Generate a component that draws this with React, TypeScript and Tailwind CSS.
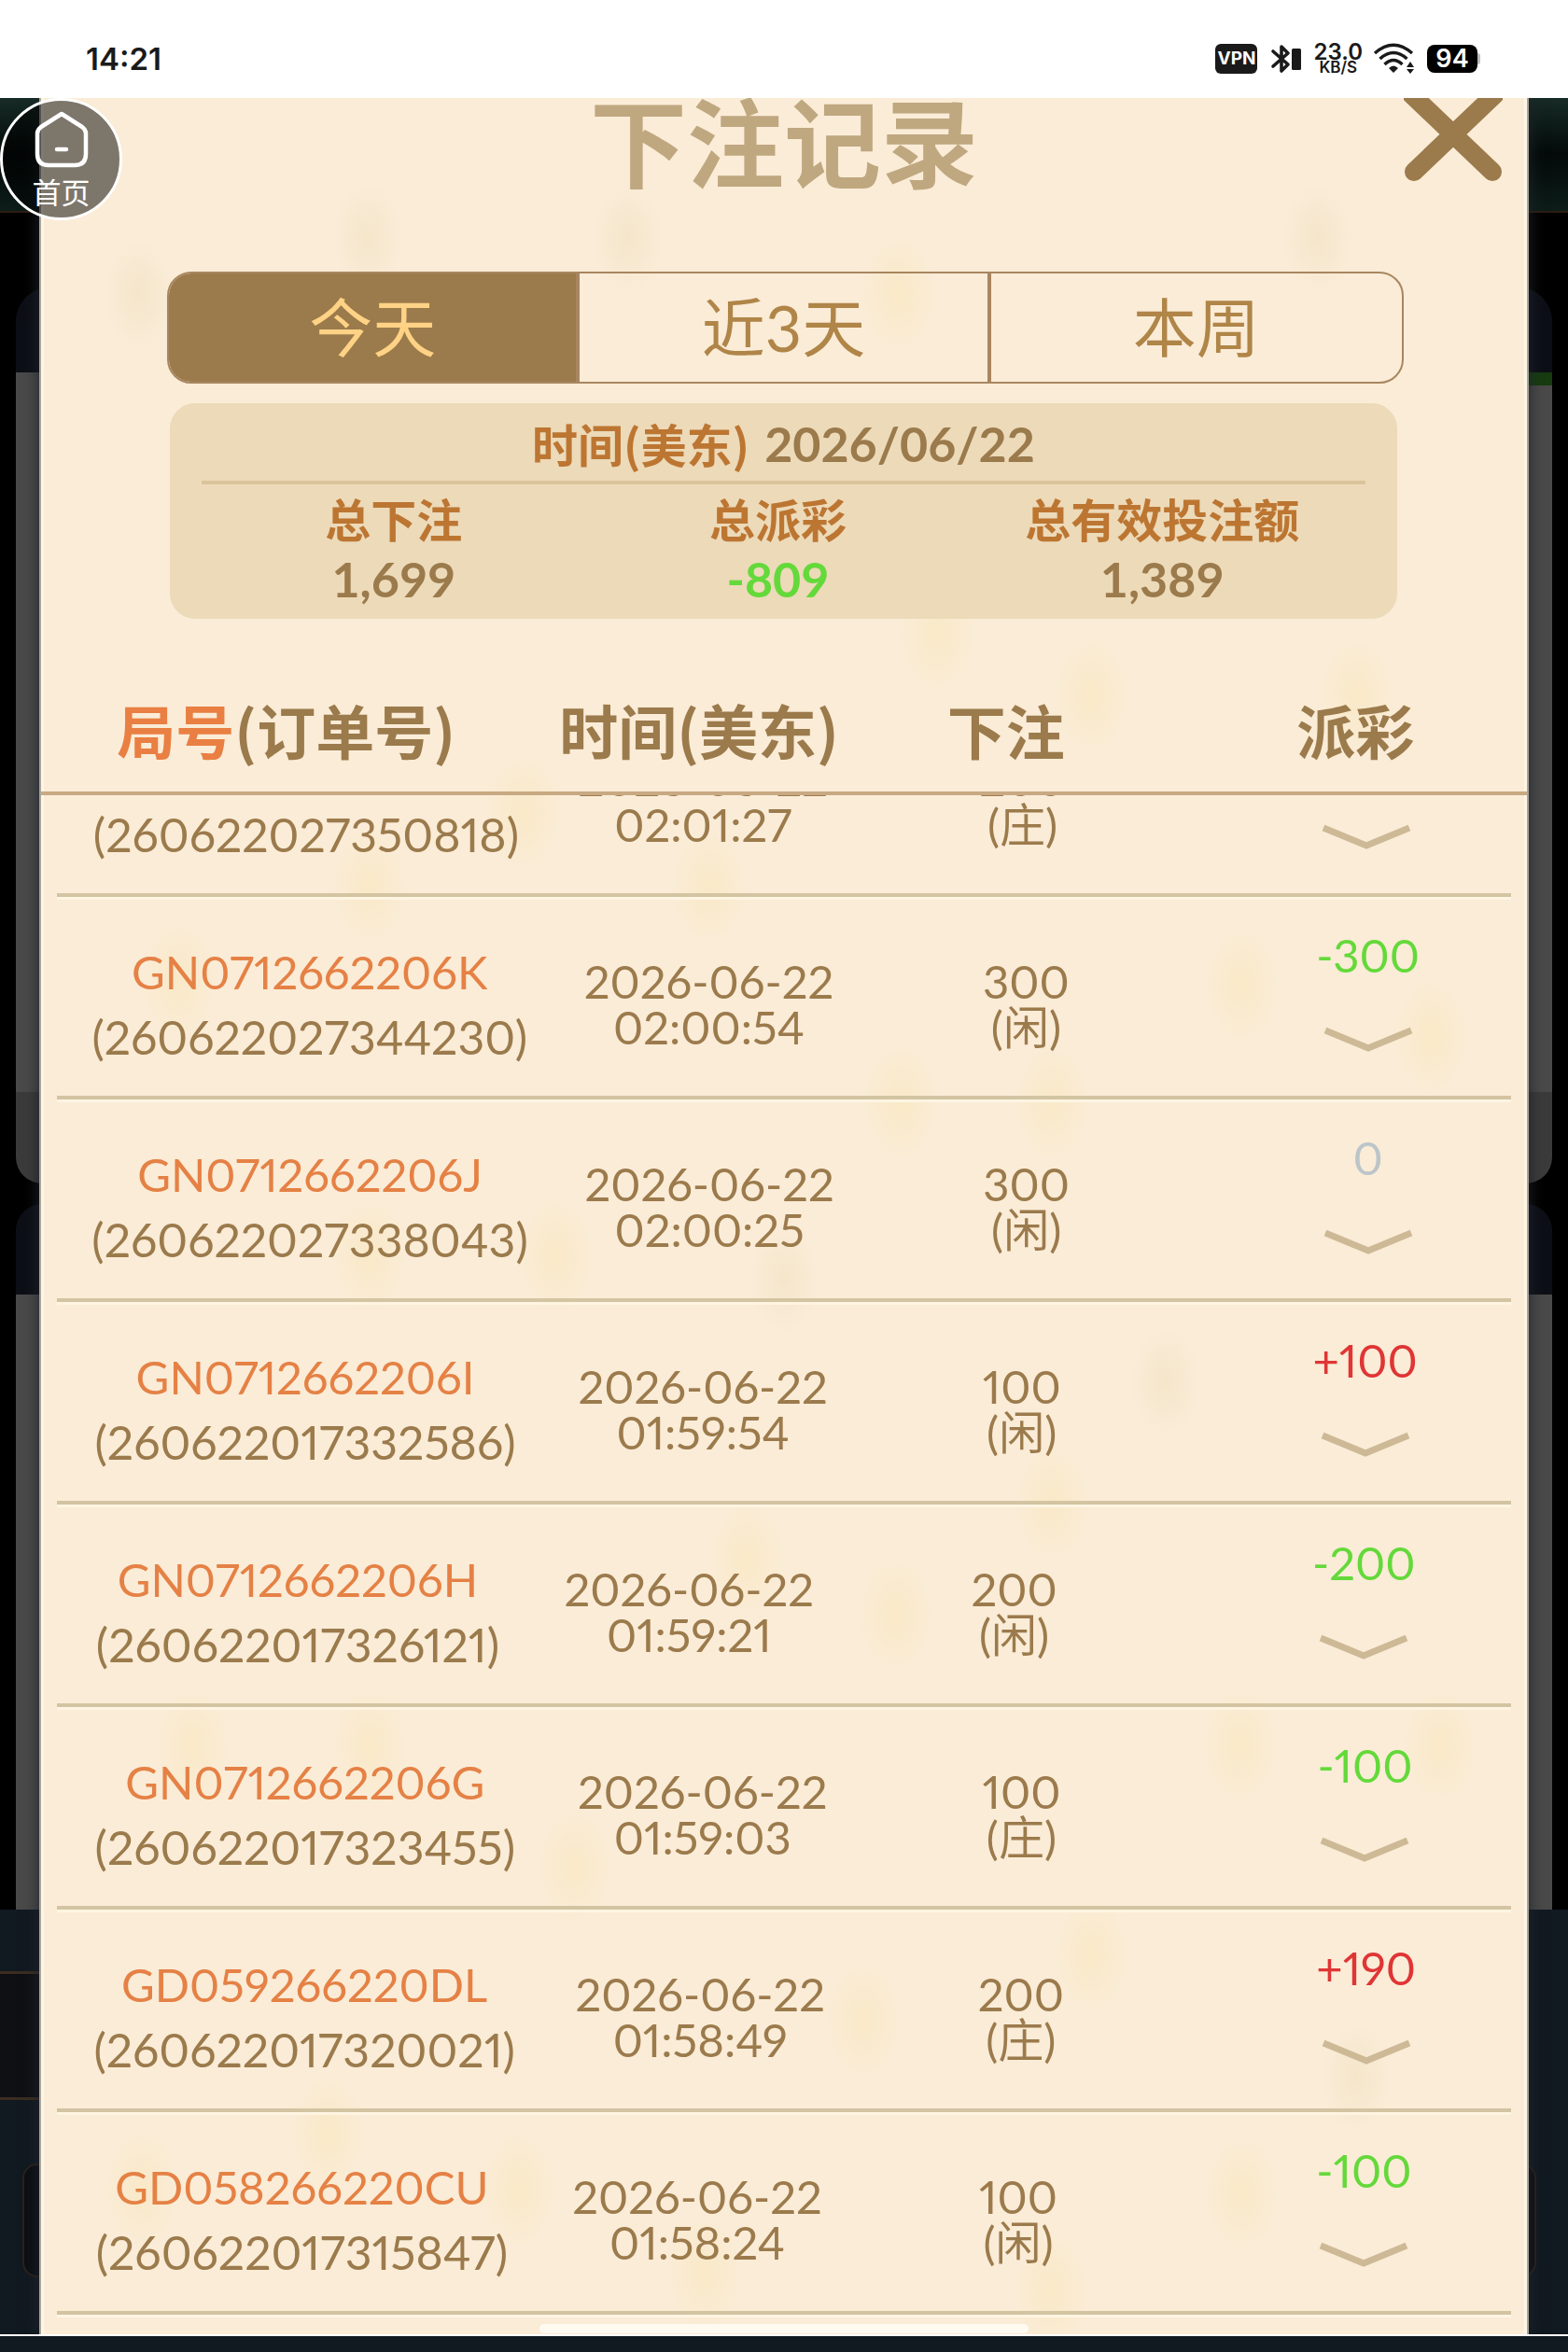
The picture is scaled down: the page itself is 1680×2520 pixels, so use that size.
import { useState } from "react";

type BetRecord = {
  round: string;
  order: string;
  date: string;
  time: string;
  amount: string;
  side: string;
  payout: string;
};

const TABS = ["今天", "近3天", "本周"];

const SUMMARY = [
  { label: "总下注", value: "1,699", color: "text-[#9b7a4c]" },
  { label: "总派彩", value: "-809", color: "text-[#64d93a]" },
  { label: "总有效投注额", value: "1,389", color: "text-[#9b7a4c]" },
];

const RECORDS: BetRecord[] = [
  { round: "", order: "260622027350818", date: "2026-06-22", time: "02:01:27", amount: "200", side: "庄", payout: "" },
  { round: "GN0712662206K", order: "260622027344230", date: "2026-06-22", time: "02:00:54", amount: "300", side: "闲", payout: "-300" },
  { round: "GN0712662206J", order: "260622027338043", date: "2026-06-22", time: "02:00:25", amount: "300", side: "闲", payout: "0" },
  { round: "GN0712662206I", order: "260622017332586", date: "2026-06-22", time: "01:59:54", amount: "100", side: "闲", payout: "+100" },
  { round: "GN0712662206H", order: "260622017326121", date: "2026-06-22", time: "01:59:21", amount: "200", side: "闲", payout: "-200" },
  { round: "GN0712662206G", order: "260622017323455", date: "2026-06-22", time: "01:59:03", amount: "100", side: "庄", payout: "-100" },
  { round: "GD059266220DL", order: "260622017320021", date: "2026-06-22", time: "01:58:49", amount: "200", side: "庄", payout: "+190" },
  { round: "GD058266220CU", order: "260622017315847", date: "2026-06-22", time: "01:58:24", amount: "100", side: "闲", payout: "-100" },
];

// soft stains of the paper texture: x, y
const GOLD_SPOTS = [
  [921, 210], [963, 575], [1128, 640], [1413, 640], [518, 765], [353, 845], [718, 845],
  [923, 1075], [1086, 1075], [1290, 950], [1493, 1005], [148, 945], [353, 1240], [553, 1240],
  [758, 1565], [1086, 1505], [918, 1625], [163, 1765], [353, 1765], [1288, 1765], [1503, 1765],
  [573, 1895], [883, 2060], [1128, 1990], [308, 2180], [108, 2240], [513, 2240], [713, 2330],
  [1290, 2245], [1085, 2350],
];
const TAN_SPOTS = [[105, 210], [351, 150], [630, 150], [1371, 150], [798, 1265], [1208, 1375], [1413, 2120]];

const payoutColor = (value: string) => {
  if (value.startsWith("+")) return "text-[#e03535]";
  if (value.startsWith("-")) return "text-[#64d93a]";
  return "text-[#bcc5c9]";
};

const StatusBar = () => (
  <header className="flex h-[105px] shrink-0 items-center justify-between bg-white pr-[94px] pl-[92px] pt-5 text-[#1a1a1a] font-[family-name:Inter,sans-serif]">
    <span className="text-[33px] leading-[34px] font-semibold">14:21</span>
    <div className="flex items-center">
      <span className="flex h-8 w-[45px] items-center justify-center rounded-md bg-[#1a1a1a] text-[19px] leading-[19px] font-bold text-white">
        VPN
      </span>
      <svg className="ml-[14px] h-8 w-[34px]" viewBox="0 0 34 32" fill="none">
        <path d="M3 8 L19 22 L12 29 V3 L19 10 L3 24" stroke="#1a1a1a" strokeWidth="3.6" strokeLinejoin="round" strokeLinecap="round" />
        <rect x="23" y="5" width="10" height="23" rx="1.5" fill="#1a1a1a" />
      </svg>
      <span className="ml-3 flex flex-col items-center font-semibold">
        <span className="text-[24px] leading-[19px]">23.0</span>
        <span className="text-[17px] leading-[15px]">KB/S</span>
      </span>
      <svg className="ml-[11px] h-[34px] w-12" viewBox="0 0 48 34" fill="none" stroke="#1a1a1a" strokeWidth="3.4">
        <path d="M2 11 Q22 -6.500 42 11" />
        <path d="M7.500 17 Q22 4 36.500 17" />
        <path d="M12.500 23 Q22 14 31.500 23" />
        <path d="M17 27 Q22 22 27 27 L22 32 Z" fill="#1a1a1a" stroke="none" />
        <path d="M36 26 L40 20 L44 26 Z M36 28 L40 33 L44 28 Z" fill="#1a1a1a" stroke="none" />
      </svg>
      <span className="ml-[10px] flex h-[30px] w-[54px] items-center justify-center rounded-lg bg-black text-[27px] leading-[27px] font-semibold text-white">
        94
      </span>
      <span className="h-3 w-[3px] rounded-r-sm bg-[#bdbdbd]" />
    </div>
  </header>
);

const Backdrop = () => (
  <div className="absolute inset-0 flex flex-col bg-black">
    <div className="h-[123px] border-b-2 border-[#2c1d12] bg-linear-to-b from-[#182c26] via-[#040a09] to-[#0d1d19]" />
    <div className="mx-[17px] mt-20 h-[91px] rounded-t-[36px] bg-[#0c0f16]" />
    <div className="mx-[17px] flex h-[14px] justify-end bg-[#4a4a4a]">
      <div className="w-1/2 bg-[#173c10]" />
    </div>
    <div className="mx-[17px] h-[757px] bg-[#4a4a4a]" />
    <div className="mx-[17px] h-[98px] rounded-b-[28px] bg-[#3b3b3b]" />
    <div className="mx-[17px] mt-[22px] h-[97px] rounded-t-[28px] bg-[#0c0f16]" />
    <div className="mx-[17px] h-[659px] bg-[#4a4a4a]" />
    <div className="flex-1 bg-[#111921]">
      <div className="mt-[66px] h-[138px] w-1/2 border-y-3 border-[#3b2d20] bg-[#0e1014]" />
      <div className="mr-[34px] ml-6 mt-[68px] h-[122px] rounded-2xl border-2 border-[#2b221c] bg-[#0b0e13]" />
    </div>
  </div>
);

const Stains = () => (
  <svg className="absolute inset-0 h-full w-full" viewBox="0 0 1596 2396" preserveAspectRatio="none" aria-hidden="true">
    <defs>
      <radialGradient id="gold">
        <stop offset="0" stopColor="#f9e6b8" stopOpacity="0.5" />
        <stop offset="0.5" stopColor="#f9e6b8" stopOpacity="0.25" />
        <stop offset="1" stopColor="#f9e6b8" stopOpacity="0" />
      </radialGradient>
      <radialGradient id="tan">
        <stop offset="0" stopColor="#ecdcb8" stopOpacity="0.4" />
        <stop offset="1" stopColor="#ecdcb8" stopOpacity="0" />
      </radialGradient>
    </defs>
    {GOLD_SPOTS.map(([x, y]) => (
      <ellipse key={`${x}-${y}`} cx={x} cy={y} rx="42" ry="66" fill="url(#gold)" />
    ))}
    {TAN_SPOTS.map(([x, y]) => (
      <ellipse key={`${x}-${y}`} cx={x} cy={y} rx="38" ry="60" fill="url(#tan)" />
    ))}
  </svg>
);

const RecordRow = ({ record }: { record: BetRecord }) => (
  <tr className="mx-[17px] flex h-[217px] items-center border-b-4 border-[#d3c4a2] pt-4 text-center shadow-[0_3px_0_#fef5e2]">
    <td className="flex-auto px-[14px] leading-[70px]">
      <a href="#round" className="block min-h-[70px] text-[49px] text-[#e58145]">
        {record.round}
      </a>
      <span className="block">({record.order})</span>
    </td>
    <td className="flex-auto text-[49px] leading-[49px]">
      <span className="block">{record.date}</span>
      <span className="block">{record.time}</span>
    </td>
    <td className="flex-auto px-[113px] text-[49px] leading-[49px]">
      <span className="block">{record.amount}</span>
      <span className="block">({record.side})</span>
    </td>
    <td className="flex flex-auto flex-col items-center self-start pt-[22px] pl-[30px] text-[49px] leading-[49px]">
      <span className={`h-[49px] w-[260px] ${payoutColor(record.payout)}`}>{record.payout}</span>
      <button className="mt-[51px]" aria-label="展开">
        <svg className="h-7 w-24" viewBox="0 0 96 28" fill="none">
          <path d="M2 5 L48 24 L94 5" stroke="#cdb995" strokeWidth="7" />
        </svg>
      </button>
    </td>
  </tr>
);

const App = () => {
  const [activeTab, setActiveTab] = useState(0);

  return (
    <div className="flex h-screen flex-col overflow-hidden bg-[#111921] font-[family-name:Lato,'Noto_Sans_CJK_SC',sans-serif] text-[50px] text-[#9b7a4c]">
      <StatusBar />

      <main className="relative flex min-h-0 flex-1 flex-col overflow-hidden border-b-2 border-white">
        <Backdrop />

        <section className="relative mx-[42px] flex min-h-0 flex-1 flex-col border-x-2 border-[#aaa59a] bg-[#faecd7] shadow-[inset_3px_0_0_#fdf6e6,inset_-3px_0_0_#fdf6e6,0_0_16px_#20242c]">
          <Stains />

          <h1 className="relative text-center font-[family-name:'Noto_Sans_CJK_SC',sans-serif] text-[104px] leading-[88px] font-bold text-[#bfa780]">
            下注记录
          </h1>
          <button className="absolute top-0 right-[26px]" aria-label="关闭">
            <svg className="h-[90px] w-[106px]" viewBox="0 0 106 90" fill="none">
              <path d="M8 -4 L95 79 M98 -4 L11 79" stroke="#9b7a4c" strokeWidth="20" strokeLinecap="round" />
            </svg>
          </button>

          <div className="relative mr-[132px] ml-[135px] mt-[98px] grid h-[120px] grid-cols-3 overflow-hidden rounded-[26px] border-2 border-[#a88660]">
            {TABS.map((tab, i) => (
              <button
                key={tab}
                onClick={() => setActiveTab(i)}
                className={`border-[#a88660] text-[68px] leading-[68px] not-last:border-r-4 ${
                  i === activeTab ? "bg-[#9b7a4c] text-[#ffd285]" : "text-[#b08548]"
                }`}
              >
                {tab}
              </button>
            ))}
          </div>

          <div className="relative mr-[139px] ml-[138px] mt-[21px] h-[231px] rounded-[27px] bg-[#ecdab9] px-[34px] pt-[11px] font-bold">
            <p className="flex items-center justify-center gap-4 border-b-4 border-[#dac49c] pb-2 leading-[64px]">
              <span className="font-[family-name:'Noto_Sans_CJK_SC',sans-serif] text-[49px] text-[#bc7632]">时间(美东)</span>
              <span className="text-[52px]">2026/06/22</span>
            </p>
            <dl className="grid grid-cols-3 pt-[6px] pr-3 text-center">
              {SUMMARY.map((item) => (
                <div key={item.label}>
                  <dt className="text-[49px] leading-[64px] text-[#bc7632]">{item.label}</dt>
                  <dd className={`text-[52px] leading-[62px] ${item.color}`}>{item.value}</dd>
                </div>
              ))}
            </dl>
          </div>

          <table className="relative flex min-h-0 flex-1 flex-col">
            <thead className="block">
              <tr className="grid h-[189px] grid-cols-[526fr_360fr_298fr_410fr] border-b-4 border-[#c8a982] pt-[87px] font-[family-name:'Noto_Sans_CJK_SC',sans-serif] text-[63px] leading-[62px]">
                <th className="font-bold">
                  <span className="text-[#e97f42]">局号</span>(订单号)
                </th>
                <th className="font-bold">时间(美东)</th>
                <th className="font-bold">下注</th>
                <th className="pl-[42px] font-bold">派彩</th>
              </tr>
            </thead>
            <tbody className="block min-h-0 flex-1 overflow-hidden proportional-nums">
              <tr className="-mb-[108px] block" />
              {RECORDS.map((record) => (
                <RecordRow key={record.order} record={record} />
              ))}
            </tbody>
          </table>
        </section>

        <div className="absolute inset-x-0 bottom-px flex justify-center">
          <div className="h-[10px] w-[524px] rounded-full bg-[#fffaf0]" />
        </div>
      </main>
      <footer className="h-[17px] shrink-0" />

      <button className="absolute top-[105px] left-0 flex h-[131px] w-[131px] flex-col items-center rounded-full border-3 border-white bg-black/50 pt-[11px] text-white">
        <svg className="h-[62px] w-[58px]" viewBox="0 0 58 62" fill="none" stroke="white" strokeWidth="4.500" strokeLinejoin="round" strokeLinecap="round">
          <path d="M29 3 L51 17 Q55 20 55 24 V46 Q55 58 43 58 H15 Q3 58 3 46 V24 Q3 20 7 17 Z" />
          <path d="M24 41 H34" />
        </svg>
        <span className="mt-2 text-[31px] leading-[34px]">首页</span>
      </button>
    </div>
  );
};

export default App;
